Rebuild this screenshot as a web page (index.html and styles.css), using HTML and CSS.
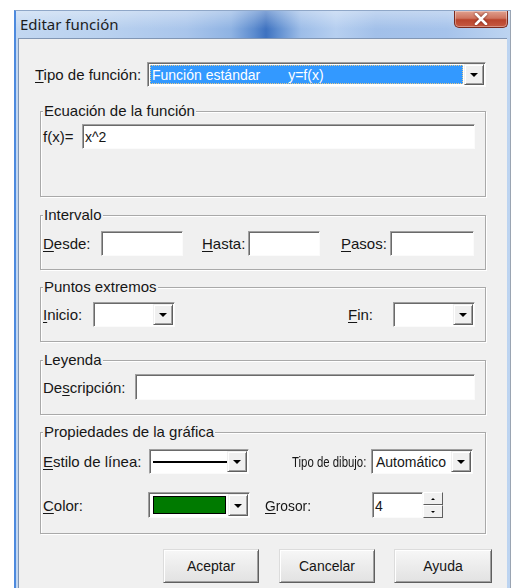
FILE: index.html
```html
<!DOCTYPE html>
<html lang="es">
<head>
<meta charset="utf-8">
<title>Editar función</title>
<link rel="stylesheet" href="styles.css">
</head>
<body>
<div class="window">
  <div class="titlebar">
    <span class="title">Editar función</span>
    <div class="close">
      <svg width="16" height="12" viewBox="0 0 16 12"><path d="M3 1 L13 11 M13 1 L3 11" stroke="#fff" stroke-width="2.6" stroke-linecap="round"/></svg>
    </div>
  </div>

  <div class="client">
    <div class="row type-row">
      <span class="lbl w-tipo"><u>T</u>ipo de función:</span>
      <div class="field combo grow">
        <div class="value sel"><span>Función estándar</span><span class="sel-eq">y=f(x)</span></div>
        <div class="drop"><i class="tri"></i></div>
      </div>
    </div>

    <div class="group g-eq">
      <span class="group-title">Ecuación de la función</span>
      <div class="row">
        <span class="lbl w-fx">f(x)=</span>
        <div class="field grow"><span class="text">x^2</span></div>
      </div>
    </div>

    <div class="group g-int">
      <span class="group-title">Intervalo</span>
      <div class="row">
        <span class="lbl w-desde"><u>D</u>esde:</span>
        <div class="field w82"></div>
        <span class="lbl w-hasta"><u>H</u>asta:</span>
        <div class="field w72"></div>
        <span class="lbl w-pasos"><u>P</u>asos:</span>
        <div class="field w84"></div>
      </div>
    </div>

    <div class="group g-pts">
      <span class="group-title">Puntos extremos</span>
      <div class="row">
        <span class="lbl w-inicio"><u>I</u>nicio:</span>
        <div class="field combo w82"><div class="value"></div><div class="drop"><i class="tri"></i></div></div>
        <span class="lbl lbl-fin"><u>F</u>in:</span>
        <div class="field combo w82"><div class="value"></div><div class="drop"><i class="tri"></i></div></div>
      </div>
    </div>

    <div class="group g-ley">
      <span class="group-title">Leyenda</span>
      <div class="row">
        <span class="lbl w-desc">De<u>s</u>cripción:</span>
        <div class="field grow tall"></div>
      </div>
    </div>

    <div class="group g-prop">
      <span class="group-title">Propiedades de la gráfica</span>
      <div class="row">
        <span class="lbl w-estilo"><u>E</u>stilo de línea:</span>
        <div class="field combo w100">
          <div class="value"><span class="line-sample"></span></div>
          <div class="drop"><i class="tri"></i></div>
        </div>
        <span class="lbl w-dibujo"><span class="narrow">Tipo de dibujo:</span></span>
        <div class="field combo w102">
          <div class="value"><span class="text">Automático</span></div>
          <div class="drop"><i class="tri"></i></div>
        </div>
      </div>
      <div class="row row-2">
        <span class="lbl w-color"><u>C</u>olor:</span>
        <div class="field combo w102 tall">
          <div class="value"><span class="swatch"></span></div>
          <div class="drop"><i class="tri"></i></div>
        </div>
        <span class="lbl w-grosor"><span class="narrow-s"><u>G</u>rosor:</span></span>
        <div class="field spin-field tall"><span class="text">4</span></div>
        <div class="spin">
          <div class="spin-btn"><i class="tri-up"></i></div>
          <div class="spin-btn"><i class="tri-down"></i></div>
        </div>
      </div>
    </div>

    <div class="buttons">
      <button class="btn">Aceptar</button>
      <button class="btn">Cancelar</button>
      <button class="btn btn-wide">Ayuda</button>
    </div>
  </div>
</div>
</body>
</html>
```

FILE: styles.css
```css
* { box-sizing: border-box; }

html, body {
  margin: 0;
  padding: 0;
  background: #fff;
  overflow: hidden;
}

body {
  width: 515px;
  height: 588px;
  font: 15px "Liberation Sans", Arial, sans-serif;
  color: #161616;
}

/* window frame: aero glass */
.window {
  margin: 10px 0 0 14px;
  width: 497px;
  height: 578px;
  overflow: hidden;
  border-left: 2px solid #4d8ade;
  border-right: 1px solid #9aa4b2;
  border-top: 1px solid #8fa7c8;
  background:
    linear-gradient(180deg, rgba(255,255,255,0.35) 0px, rgba(255,255,255,0) 18px),
    linear-gradient(90deg,
      #c2d7f1 0px, #b9d1ef 90px, #a9c5eb 170px, #8fb3e3 215px,
      #5d8ccf 238px, #3e72c0 250px, #5f8ed0 262px, #9dbde8 285px,
      #b6cff0 320px, #a2c0e9 360px, #a6c3eb 430px, #bed5f1 497px);
}

.titlebar {
  height: 27px;
  display: flex;
  justify-content: space-between;
  align-items: flex-start;
  padding-left: 4px;
}

.title {
  font: 15px "Noto Sans", "Liberation Sans", sans-serif;
  color: #1c1c1c;
  margin-top: 3px;
}

.close {
  width: 54px;
  height: 17px;
  margin-right: 2px;
  border: 1px solid #7a2a1e;
  border-top: none;
  border-radius: 0 0 5px 5px;
  background: linear-gradient(180deg, #e0a08f 0%, #cf745f 45%, #b9442c 55%, #c65a42 100%);
  box-shadow: inset 0 0 0 1px rgba(255,255,255,0.35);
  display: flex;
  align-items: center;
  justify-content: center;
}

.close svg { display: block; filter: drop-shadow(0 0 1px #6a1a10); }

/* dialog body */
.client {
  margin: 0 3px 0 2px;
  height: 560px;
  background: #f0f0f0;
  border-top: 1px solid #8196b4;
  border-left: 1px solid #8196b4;
  padding: 23px 0 0 16px;
}

.row {
  display: flex;
  align-items: center;
}

.lbl { flex: none; white-space: nowrap; }
.lbl u { text-decoration-thickness: 1px; text-underline-offset: 2px; }

.narrow {
  display: inline-block;
  transform: scaleX(0.76);
  transform-origin: left center;
}

.narrow-s {
  display: inline-block;
  transform: scaleX(0.92);
  transform-origin: left center;
}

.grow { flex: 1; }

.w-tipo { width: 112px; }
.type-row { width: 451px; height: 25px; }

/* sunken edit field */
.field {
  height: 25px;
  background: #fff;
  border: 1px solid;
  border-color: #a0a0a0 #fbfbfb #fbfbfb #a0a0a0;
  box-shadow: inset 1px 1px 0 #6a6a6a;
  display: flex;
  align-items: center;
  font-size: 14px;
}

.field.tall { height: 26px; }

.text { padding-left: 2px; padding-top: 1px; }

.w72 { width: 72px; }
.w82 { width: 82px; }
.w84 { width: 84px; }
.w100 { width: 100px; }
.w102 { width: 102px; }

/* combo box */
.combo { padding: 1px 1px 1px 2px; align-items: stretch; }
.combo .value { flex: 1; display: flex; align-items: center; }

.sel {
  background: #3399ff;
  color: #fff;
  border: 1px dotted #e6c98a;
  margin: 1px 1px 1px 0;
  padding-left: 1px;
}

.sel-eq { margin-left: 28px; }

.drop {
  width: 20px;
  flex: none;
  background: #f0f0f0;
  border: 1px solid;
  border-color: #f0f0f0 #5f5f5f #5f5f5f #f0f0f0;
  box-shadow: inset 1px 1px 0 #fff, inset -1px -1px 0 #a0a0a0;
  display: flex;
  align-items: center;
  justify-content: center;
}

.tri {
  width: 0;
  height: 0;
  border-left: 4px solid transparent;
  border-right: 4px solid transparent;
  border-top: 4px solid #000;
  margin-top: 1px;
}

/* group boxes */
.group {
  position: relative;
  margin-left: 5px;
  width: 446px;
  border: 1px solid #a9a9a9;
  box-shadow: inset 1px 1px 0 #fff, 1px 1px 0 #fff;
  padding: 0 10px 0 2px;
}

.group-title {
  position: absolute;
  top: -9px;
  left: 2px;
  line-height: 16px;
  padding: 0 1px;
  background: #f0f0f0;
}

.g-eq { margin-top: 24px; height: 86px; padding-top: 12px; }
.g-int { margin-top: 18px; height: 55px; padding-top: 15px; }
.g-pts { margin-top: 17px; height: 55px; padding-top: 14px; }
.g-ley { margin-top: 18px; height: 55px; padding-top: 13px; }
.g-prop { margin-top: 17px; height: 102px; padding-top: 16px; }

.w-fx { width: 39px; }

.w-desde { width: 58px; }
.w-hasta { width: 46px; margin-left: 19px; }
.w-pasos { width: 49px; margin-left: 21px; }

.w-inicio { width: 50px; }
.lbl-fin { margin-left: auto; margin-right: 20px; }

.w-desc { width: 92px; }

.w-estilo { width: 106px; }
.w-dibujo { width: 79px; margin-left: 43px; }
.w-color { width: 105px; }
.w-grosor { width: 107px; margin-left: 15px; }

.row-2 { margin-top: 18px; }

.line-sample {
  display: block;
  width: 74px;
  height: 2px;
  margin-left: 1px;
  background: #000;
}

.swatch {
  display: block;
  width: 73px;
  height: 18px;
  margin-left: 2px;
  background: #007a00;
  border: 1px solid #000;
}

.spin-field { width: 51px; }

.spin {
  width: 20px;
  height: 26px;
  display: flex;
  flex-direction: column;
}

.spin-btn {
  flex: 1;
  background: #f0f0f0;
  border: 1px solid;
  border-color: #fff #5f5f5f #5f5f5f #fff;
  display: flex;
  align-items: center;
  justify-content: center;
}

.tri-up, .tri-down {
  width: 0;
  height: 0;
  border-left: 2px solid transparent;
  border-right: 2px solid transparent;
}
.tri-up { border-bottom: 2px solid #000; }
.tri-down { border-top: 2px solid #000; }

/* push buttons */
.buttons {
  display: flex;
  gap: 20px;
  margin: 15px 0 0 128px;
}

.btn {
  width: 96px;
  height: 34px;
  padding: 0;
  font: 14px "Liberation Sans", Arial, sans-serif;
  color: #161616;
  background: linear-gradient(180deg, #f7f7f7 0%, #ececec 50%, #e2e2e2 100%);
  border: 1px solid;
  border-color: #dcdcdc #5f5f5f #5f5f5f #dcdcdc;
  box-shadow: inset 1px 1px 0 #fff, inset -1px -1px 0 #a0a0a0;
}

.btn-wide { width: 98px; margin-left: -1px; }
```
